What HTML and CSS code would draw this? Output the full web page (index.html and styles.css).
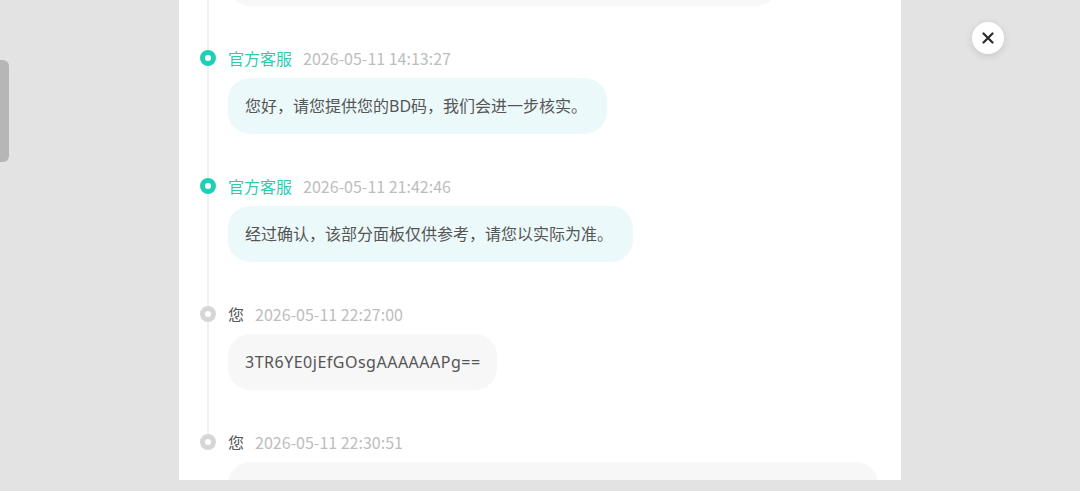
FILE: index.html
```html
<!DOCTYPE html>
<html lang="zh-CN">
<head>
<meta charset="utf-8">
<title>工单记录</title>
<link rel="stylesheet" href="styles.css">
</head>
<body>
<div class="side-tab"></div>
<button class="close-btn" aria-label="关闭">
  <svg viewBox="0 0 12 12" width="12" height="12"><path d="M1.5 1.5L10.5 10.5M10.5 1.5L1.5 10.5" stroke="#2b2b2b" stroke-width="2.2" stroke-linecap="round"/></svg>
</button>
<main class="panel">
  <ul class="timeline">
    <li class="item user">
      <div class="head"><span class="dot"></span><span class="name"></span><span class="time"></span></div>
      <div class="bubble wide-prev">&nbsp;</div>
    </li>
    <li class="item staff">
      <div class="head"><span class="dot"></span><span class="name">官方客服</span><span class="time">2026-05-11 14:13:27</span></div>
      <div class="bubble">您好，请您提供您的BD码，我们会进一步核实。</div>
    </li>
    <li class="item staff">
      <div class="head"><span class="dot"></span><span class="name">官方客服</span><span class="time">2026-05-11 21:42:46</span></div>
      <div class="bubble">经过确认，该部分面板仅供参考，请您以实际为准。</div>
    </li>
    <li class="item user">
      <div class="head"><span class="dot"></span><span class="name">您</span><span class="time">2026-05-11 22:27:00</span></div>
      <div class="bubble code">3TR6YE0jEfGOsgAAAAAAPg==</div>
    </li>
    <li class="item user last">
      <div class="head"><span class="dot"></span><span class="name">您</span><span class="time">2026-05-11 22:30:51</span></div>
      <div class="bubble full">&nbsp;</div>
    </li>
  </ul>
</main>
</body>
</html>
```
FILE: styles.css
```css
* { box-sizing: border-box; }
html, body {
  margin: 0;
  padding: 0;
  height: 100%;
  background: #e3e3e3;
  overflow: hidden;
  font-family: "Noto Sans CJK SC", "Noto Sans", sans-serif;
}
.panel {
  width: 722px;
  height: 480px;
  margin: 0 auto;
  background: #ffffff;
  overflow: hidden;
}
.timeline {
  list-style: none;
  margin: -80px 0 0 0;
  padding: 0 0 0 21px;
}
.item {
  position: relative;
  padding-bottom: 42px;
}
.item::before {
  content: "";
  position: absolute;
  left: 7px;
  top: 10px;
  bottom: -10px;
  width: 2px;
  background: #f1f1f1;
}
.item.last::before { display: none; }
.head {
  position: relative;
  display: flex;
  align-items: center;
  height: 20px;
  font-size: 16px;
  line-height: 20px;
}
.dot {
  width: 16px;
  height: 16px;
  border-radius: 50%;
  border: 5px solid #d6d6d6;
  background: #fff;
  margin-right: 12px;
  flex: none;
}
.staff .dot { border-color: #1fd0b9; }
.name { color: #555; margin-right: 11px; }
.staff .name { color: #2ccab5; }
.time { color: #bdbdbd; }
.bubble {
  display: inline-block;
  margin: 10px 0 0 28px;
  padding: 16px 20px 16px 17px;
  line-height: 24px;
  font-size: 16px;
  font-family: "Noto Sans", "Noto Sans CJK SC", sans-serif;
  color: #555;
  background: #f7f7f7;
  border-radius: 22px;
}
.staff .bubble { background: #ecf9fa; }
.bubble.code { letter-spacing: 0.5px; padding-right: 16px; }
.bubble.wide-prev { width: 550px; }
.bubble.full { width: 650px; }
.side-tab {
  position: fixed;
  left: 0;
  top: 60px;
  width: 9px;
  height: 102px;
  background: #b6b6b6;
  border-radius: 0 6px 6px 0;
}
.close-btn {
  position: fixed;
  left: 972px;
  top: 22px;
  width: 32px;
  height: 32px;
  border: none;
  padding: 0;
  border-radius: 50%;
  background: #fff;
  box-shadow: 0 2px 8px rgba(0,0,0,0.12);
  display: flex;
  align-items: center;
  justify-content: center;
  cursor: pointer;
}
```
